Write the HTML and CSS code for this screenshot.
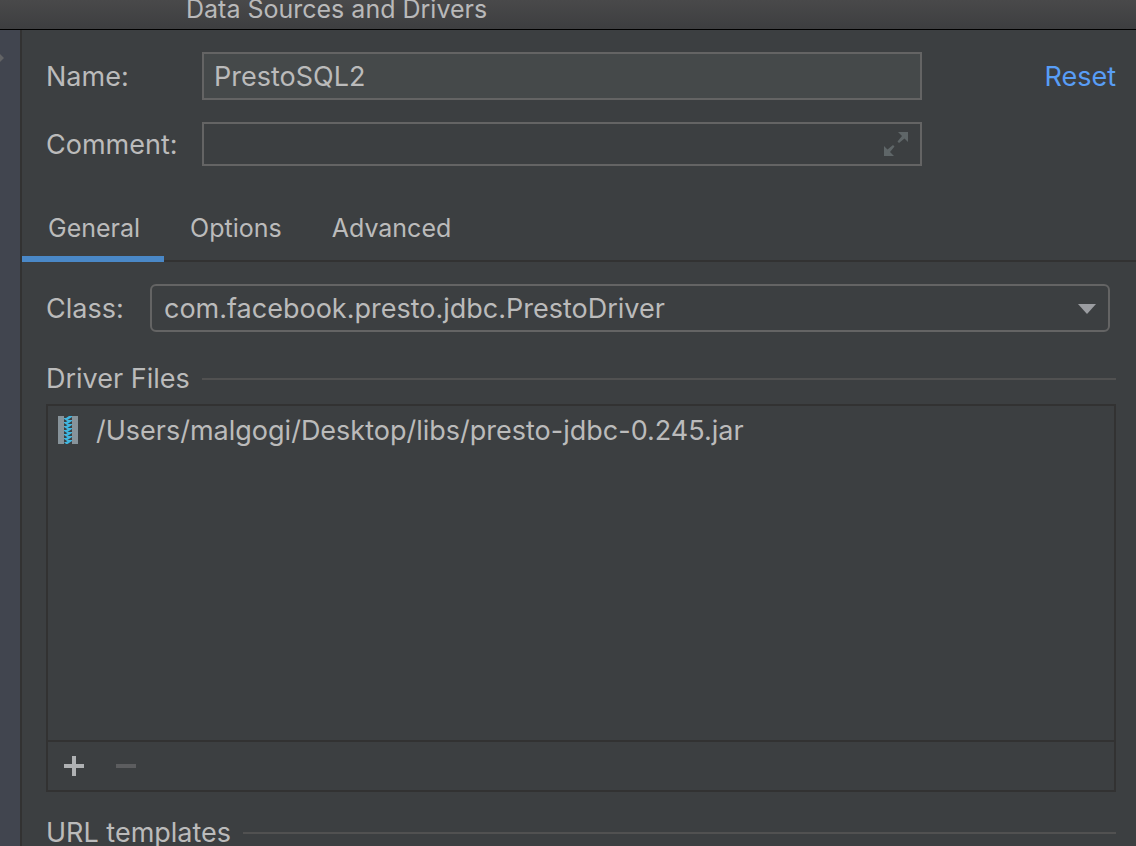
FILE: index.html
```
<!DOCTYPE html>
<html lang="en">

<head>
    <meta charset="UTF-8" />
    <meta name="viewport" content="width=device-width, initial-scale=1.0" />
    <title>Data Sources and Drivers</title>
    <link rel="stylesheet" href="styles.css">
</head>

<body>
    <header class="titlebar">Data Sources and Drivers</header>

    <div class="window">
        <aside class="sidebar">
            <svg class="splitter" width="4" height="8" viewBox="0 0 4 8"><path d="M0 0L4 4L0 8Z" fill="#626365" /></svg>
        </aside>

        <main class="panel">
            <form class="details">
                <div class="row">
                    <label for="name">Name:</label>
                    <input type="text" id="name" class="name-input" value="PrestoSQL2" />
                    <a href="#" class="reset">Reset</a>
                </div>
                <div class="row">
                    <label for="comment">Comment:</label>
                    <div class="comment-field">
                        <input type="text" id="comment" />
                        <button type="button" class="expand" aria-label="Expand">
                            <svg width="24" height="24" viewBox="0 0 24 24" fill="#5f6668">
                                <path d="M14 0H24V10L20.500 6.500L15 11L13.500 9.500L18 4Z" />
                                <path d="M10 24H0V14L3.500 17.500L9 13L10.500 14.500L6 20Z" />
                            </svg>
                        </button>
                    </div>
                </div>
            </form>

            <nav class="tabs">
                <button type="button" class="tab active">General</button>
                <button type="button" class="tab">Options</button>
                <button type="button" class="tab">Advanced</button>
            </nav>

            <div class="content">
                <div class="class-row">
                    <label for="driver-class">Class:</label>
                    <div class="select-wrap">
                        <select id="driver-class">
                            <option>com.facebook.presto.jdbc.PrestoDriver</option>
                        </select>
                        <svg class="arrow" width="18" height="10" viewBox="0 0 18 10"><path d="M0 0H18L9 10Z" fill="#9b9da1" /></svg>
                    </div>
                </div>

                <h2 class="section-title">Driver Files</h2>
                <div class="files">
                    <ul class="file-list">
                        <li>
                            <svg width="20" height="28" viewBox="0 0 20 28">
                                <path d="M0 0H6V28H0ZM14 0H20V28H14Z" fill="#87939a" />
                                <path d="M6 2H8L11 4V5H9L6 3ZM6 6H8L11 8V9H9L6 7ZM6 10H8L11 12V13H9L6 11ZM6 14H8L11 16V17H9L6 15ZM6 18H8L11 20V21H9L6 19ZM6 22H8L11 24V25H9L6 23ZM6 26H8L11 28H8Z" fill="#40b6e0" />
                                <path d="M14 0V1L11 3H8V2L11 0ZM14 4V5L11 7H8V6L11 4ZM14 8V9L11 11H8V10L11 8ZM14 12V13L11 15H8V14L11 12ZM14 16V17L11 19H8V18L11 16ZM14 20V21L11 23H8V22L11 20ZM14 24V25L11 27H8V26L11 24Z" fill="#40b6e0" />
                            </svg>
                            <span>/Users/malgogi/Desktop/libs/presto-jdbc-0.245.jar</span>
                        </li>
                    </ul>
                    <div class="toolbar">
                        <button type="button" aria-label="Add">
                            <svg width="20" height="20" viewBox="0 0 20 20"><path d="M8 0H12V8H20V12H12V20H8V12H0V8H8Z" fill="#afb1b3" /></svg>
                        </button>
                        <button type="button" aria-label="Remove" disabled>
                            <svg width="20" height="20" viewBox="0 0 20 20"><path d="M0 8H20V12H0Z" fill="#5c5d5f" /></svg>
                        </button>
                    </div>
                </div>

                <h2 class="section-title">URL templates</h2>
            </div>
        </main>
    </div>
</body>

</html>
```

FILE: styles.css
```
* {
    box-sizing: border-box;
}

body {
    display: flex;
    flex-direction: column;
    height: 100vh;
    margin: 0;
    overflow: hidden;
    background: #3c3f41;
    color: #bbbbbb;
    font-family: Inter, "Liberation Sans", sans-serif;
    font-size: 27px;
    line-height: 32px;
}

input,
select,
button {
    margin: 0;
    padding: 0;
    border: none;
    background: none;
    color: inherit;
    font: inherit;
}

svg {
    display: block;
}

.titlebar {
    display: flex;
    flex: none;
    align-items: flex-end;
    height: 30px;
    padding: 0 186px 4px;
    border-bottom: 1px solid #000;
    background: linear-gradient(#49494a, #3d3e40);
    color: #b9b9ba;
    font-size: 25px;
    white-space: nowrap;
}

.window {
    display: flex;
    flex: 1;
    min-height: 0;
}

.sidebar {
    flex: none;
    width: 22px;
    padding-top: 24px;
    border-right: 2px solid #323232;
    background: #41454f;
}

.panel {
    flex: 1;
    min-width: 0;
}

/* Name and comment */
.details {
    display: flex;
    flex-direction: column;
    gap: 22px;
    padding: 22px 20px 28px 24px;
}

.row {
    display: grid;
    grid-template-columns: 156px 1fr 194px;
    align-items: center;
}

.row input {
    width: 100%;
    height: 44px;
    padding: 0 10px;
    border: 2px solid #646464;
}

.row .name-input {
    height: 48px;
    background: #45494a;
}

.comment-field {
    position: relative;
}

.expand {
    position: absolute;
    top: 10px;
    right: 14px;
}

label,
.reset,
.file-list span {
    padding-top: 2px;
}

.reset {
    justify-self: end;
    color: #589df6;
    text-decoration: none;
}

/* Tabs */
.tabs {
    display: flex;
    height: 68px;
    border-bottom: 2px solid #323232;
    font-size: 25px;
}

.tab {
    height: 68px;
    padding: 0 24px 0 26px;
    border-top: 6px solid transparent;
    border-bottom: 6px solid transparent;
}

.tab.active {
    border-bottom-color: #4a88c7;
}

.content {
    padding: 22px 20px 0 24px;
}

.class-row {
    display: flex;
    align-items: center;
    padding-right: 6px;
}

.class-row label {
    width: 104px;
}

.select-wrap {
    position: relative;
    flex: 1;
}

.select-wrap select {
    width: 100%;
    height: 48px;
    padding: 2px 48px 0 12px;
    border: 2px solid #646464;
    border-radius: 6px;
    appearance: none;
}

.arrow {
    position: absolute;
    top: 20px;
    right: 14px;
    pointer-events: none;
}

/* Driver files */
.section-title {
    display: flex;
    align-items: center;
    gap: 12px;
    margin: 0;
    padding-top: 31px;
    font-size: 27px;
    font-weight: normal;
}

.section-title::after {
    content: "";
    flex: 1;
    height: 2px;
    background: #515151;
}

.files {
    margin-top: 9px;
    border: 2px solid #323232;
}

.file-list {
    height: 334px;
    margin: 0;
    padding: 7px 10px;
    list-style: none;
}

.file-list li {
    display: flex;
    align-items: center;
    gap: 18px;
}

.toolbar {
    display: flex;
    gap: 32px;
    height: 50px;
    padding: 0 16px;
    border-top: 2px solid #323232;
}

.files + .section-title {
    padding-top: 25px;
}
```
